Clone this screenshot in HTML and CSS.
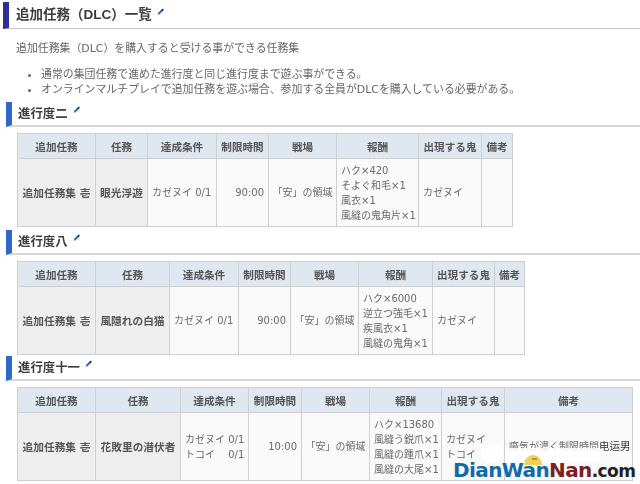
FILE: index.html
```html
<!DOCTYPE html>
<html lang="ja">
<head>
<meta charset="utf-8">
<title>追加任務（DLC）一覧</title>
<link rel="stylesheet" href="styles.css">
</head>
<body>
<main class="page">
  <h2 class="h2"><span>追加任務（DLC）一覧</span><svg class="pen" viewBox="0 0 10 10"><path d="M2 8 L7 3" stroke="#2f6fc0" stroke-width="3"/><path d="M6.5 3.5 L9 1" stroke="#14305f" stroke-width="2.6"/><path d="M0.5 9.5 L2 8" stroke="#aaa" stroke-width="1.4"/></svg></h2>
  <p class="lead">追加任務集（DLC）を購入すると受ける事ができる任務集</p>
  <ul class="notes">
    <li>通常の集団任務で進めた進行度と同じ進行度まで遊ぶ事ができる。</li>
    <li>オンラインマルチプレイで追加任務を遊ぶ場合、参加する全員がDLCを購入している必要がある。</li>
  </ul>

  <h3 class="h3 first"><span>進行度二</span><svg class="pen" viewBox="0 0 10 10"><path d="M2 8 L7 3" stroke="#2f6fc0" stroke-width="3"/><path d="M6.5 3.5 L9 1" stroke="#14305f" stroke-width="2.6"/><path d="M0.5 9.5 L2 8" stroke="#aaa" stroke-width="1.4"/></svg></h3>
  <table class="tbl t1">
    <colgroup><col class="a"><col class="b"><col class="c"><col class="d"><col class="e"><col class="f"><col class="g"><col class="h"></colgroup>
    <thead><tr><th>追加任務</th><th>任務</th><th>達成条件</th><th>制限時間</th><th>戦場</th><th>報酬</th><th>出現する鬼</th><th>備考</th></tr></thead>
    <tbody><tr>
      <th class="side">追加任務集 壱</th><th class="side">眼光浮遊</th><td>カゼヌイ 0/1</td><td class="time">90:00</td><td class="mid">「安」の領域</td>
      <td>ハク×420<br>そよぐ和毛×1<br>風衣×1<br>風縫の鬼角片×1</td><td>カゼヌイ</td><td></td>
    </tr></tbody>
  </table>

  <h3 class="h3"><span>進行度八</span><svg class="pen" viewBox="0 0 10 10"><path d="M2 8 L7 3" stroke="#2f6fc0" stroke-width="3"/><path d="M6.5 3.5 L9 1" stroke="#14305f" stroke-width="2.6"/><path d="M0.5 9.5 L2 8" stroke="#aaa" stroke-width="1.4"/></svg></h3>
  <table class="tbl t2">
    <colgroup><col class="a"><col class="b"><col class="c"><col class="d"><col class="e"><col class="f"><col class="g"><col class="h"></colgroup>
    <thead><tr><th>追加任務</th><th>任務</th><th>達成条件</th><th>制限時間</th><th>戦場</th><th>報酬</th><th>出現する鬼</th><th>備考</th></tr></thead>
    <tbody><tr>
      <th class="side">追加任務集 壱</th><th class="side">風隠れの白猫</th><td>カゼヌイ 0/1</td><td class="time">90:00</td><td class="mid">「安」の領域</td>
      <td>ハク×6000<br>逆立つ強毛×1<br>疾風衣×1<br>風縫の鬼角×1</td><td>カゼヌイ</td><td></td>
    </tr></tbody>
  </table>

  <h3 class="h3 third"><span>進行度十一</span><svg class="pen" viewBox="0 0 10 10"><path d="M2 8 L7 3" stroke="#2f6fc0" stroke-width="3"/><path d="M6.5 3.5 L9 1" stroke="#14305f" stroke-width="2.6"/><path d="M0.5 9.5 L2 8" stroke="#aaa" stroke-width="1.4"/></svg></h3>
  <table class="tbl t3">
    <colgroup><col class="a"><col class="b"><col class="c"><col class="d"><col class="e"><col class="f"><col class="g"><col class="h"></colgroup>
    <thead><tr><th>追加任務</th><th>任務</th><th>達成条件</th><th>制限時間</th><th>戦場</th><th>報酬</th><th>出現する鬼</th><th>備考</th></tr></thead>
    <tbody><tr>
      <th class="side">追加任務集 壱</th><th class="side">花敗里の潜伏者</th><td>カゼヌイ 0/1<br>トコイ　 0/1</td><td class="time">10:00</td><td class="mid">「安」の領域</td>
      <td>ハク×13680<br>風縫う鋭爪×1<br>風縫の踵爪×1<br>風縫の大尾×1</td><td>カゼヌイ<br>トコイ</td><td>瘴気が濃く制限時間<span class="ghost">电运男</span></td>
    </tr></tbody>
  </table>
</main>
<div class="mark">
  <div class="veil-dot"></div>
  <div class="veil"></div>
  <svg class="dome" viewBox="0 0 20 12"><path d="M1 12 A9 10 0 0 1 19 12 Z" fill="#f4cf55"/><path d="M9 6 h5" stroke="#8a6d10" stroke-width="1.2"/></svg>
  <div class="brand"><span class="blue">DianWan</span><span class="red">Nan</span><span class="blk">.com</span></div>
</div>
</body>
</html>
```
FILE: styles.css
```css
html, body { margin: 0; padding: 0; background: #fff; }
body {
  width: 640px; height: 484px; overflow: hidden; position: relative;
  font-family: "DejaVu Sans", "Noto Sans CJK JP", sans-serif;
  font-size: 10.5px; color: #666;
}
.page { padding-top: 2px; filter: blur(0.35px); }
.h2 {
  margin: 0 0 0 3px; height: 27px; box-sizing: border-box;
  border-left: 6px solid #2d2f96; border-bottom: 1px solid #c4c4c4;
  padding-left: 7px; display: flex; align-items: center; gap: 5px;
  font: bold 13.5px/1 "Liberation Sans", "Noto Sans CJK JP", sans-serif; color: #3a3a3a;
}
.h2 .pen { margin-top: -6px; }
.pen { width: 7px; height: 8px; flex: none; }
.lead { margin: 12px 0 0 16px; line-height: 16px; font-size: 10.9px; }
.notes { margin: 10px 0 0; padding: 0 0 0 41px; font-size: 10.9px; line-height: 15px; }
.h3 {
  margin: 3px 0 0 6px; height: 25px; box-sizing: border-box;
  border-left: 6px solid #2f68c8; border-bottom: 2px solid #d6d6d6;
  padding-left: 6px; display: flex; align-items: center; gap: 5px;
  font: bold 12.4px/1 "Noto Sans CJK JP", sans-serif; color: #3f3f3f;
}
.h3.first { margin-top: 5px; }
.h3.third { margin-top: 1px; }
.h3 .pen { margin-top: -7px; }
.tbl {
  margin: 6px 0 0 17px; border-collapse: collapse; table-layout: fixed;
  font-size: 10px;
}
.tbl th, .tbl td { border: 1px solid #cdd0d3; padding: 0 4px; overflow: visible; white-space: nowrap; }
.tbl thead th { height: 24px; background: #dfe7f0; font-weight: bold; font-size: 10.6px; color: #555; text-align: center; padding: 0; }
.tbl tbody tr { height: 68px; }
.tbl td { background: #fafafa; line-height: 15px; color: #6a6a6a; }
.tbl .side { background: #eeeeee; color: #555; text-align: center; padding: 0; font-size: 10.7px; }
.tbl .time { text-align: right; }
.tbl .mid { text-align: center; padding: 0; }
.ghost { color: #333; font-size: 10.5px; }
.t1 { width: 495px; }
.t1 .a { width: 78px; } .t1 .b { width: 52px; } .t1 .c { width: 69px; } .t1 .d { width: 52px; }
.t1 .e { width: 68px; } .t1 .f { width: 82px; } .t1 .g { width: 63px; } .t1 .h { width: 31px; }
.t2 { width: 507px; }
.t2 .a { width: 78px; } .t2 .b { width: 74px; } .t2 .c { width: 69px; } .t2 .d { width: 52px; }
.t2 .e { width: 68px; } .t2 .f { width: 74px; } .t2 .g { width: 62px; } .t2 .h { width: 30px; }
.t3 { width: 615px; }
.t3 .a { width: 78px; } .t3 .b { width: 85px; } .t3 .c { width: 68px; } .t3 .d { width: 53px; }
.t3 .e { width: 68px; } .t3 .f { width: 72px; } .t3 .g { width: 63px; } .t3 .h { width: 128px; }
.mark { position: absolute; left: 0; top: 0; width: 640px; height: 484px; pointer-events: none; }
.veil { position: absolute; left: 505px; top: 448px; width: 95px; height: 15px; background: rgba(255,255,255,.85); }
.veil-dot { position: absolute; left: 481px; top: 443px; width: 22px; height: 20px; border-radius: 50%; background: rgba(255,255,255,.8); }
.dome { position: absolute; left: 523px; top: 453px; width: 20px; height: 12px; }
.brand {
  position: absolute; left: 453px; top: 458px; white-space: nowrap;
  font: bold 20px/24px "DejaVu Sans", sans-serif; letter-spacing: -0.6px;
}
.blue { color: #0f6aa6; }
.red { color: #7a2020; }
.blk { color: #222; font-size: 17px; }
```
